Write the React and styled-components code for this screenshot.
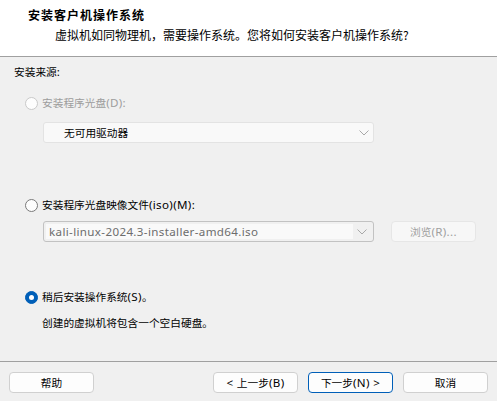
import React from 'react';
import styled, { createGlobalStyle, css } from 'styled-components';

const GlobalStyle = createGlobalStyle`
  html, body {
    margin: 0;
    padding: 0;
    background: #f0f0f0;
  }
  * {
    box-sizing: border-box;
  }
`;

const Dialog = styled.div`
  width: 497px;
  height: 401px;
  display: flex;
  flex-direction: column;
  background: #f0f0f0;
  font-family: "Noto Sans", "Noto Sans CJK SC", sans-serif;
  font-size: 10.7px;
  color: #000;
  overflow: hidden;
`;

// latin runs render wider in the original (GDI hinting), so bump them a bit
const Lat = styled.span`
  font-family: "Noto Sans", sans-serif;
  font-size: 11.6px;
  letter-spacing: 0.35px;
`;

const Header = styled.div`
  height: 57px;
  background: #ffffff;
  border-bottom: 1px solid #a0a0a0;
  padding-top: 7px;
`;

const Title = styled.div`
  margin-left: 28px;
  font-family: "Noto Sans CJK SC", sans-serif;
  font-size: 12px;
  font-weight: 700;
  line-height: 16px;
  letter-spacing: 1px;
`;

const Subtitle = styled.div`
  margin-left: 55px;
  margin-top: 4px;
  font-family: "Noto Sans CJK SC", sans-serif;
  font-size: 12px;
  line-height: 16px;
`;

const Body = styled.div`
  flex: 1;
  display: flex;
  flex-direction: column;
  padding: 7px 0 0 0;
`;

const GroupLabel = styled.div`
  margin-left: 14px;
  line-height: 16px;
`;

const RadioRow = styled.label`
  display: flex;
  align-items: center;
  gap: 4px;
  height: 16px;
  line-height: 16px;
  margin-left: 25px;
  margin-top: ${p => p.$top}px;
  color: ${p => (p.$disabled ? '#9d9d9d' : '#000')};
  white-space: pre;
`;

const RadioDot = styled.span`
  position: relative;
  width: 13px;
  height: 13px;
  border-radius: 50%;
  flex: none;
  background: #fdfdfd;
  border: 1px solid ${p => (p.$disabled ? '#c9c9c9' : '#7a7a7a')};
  ${p =>
    p.$checked &&
    css`
      background: #005fb8;
      border-color: #005fb8;
      &::after {
        content: '';
        position: absolute;
        left: 3px;
        top: 3px;
        width: 5px;
        height: 5px;
        border-radius: 50%;
        background: #fff;
      }
    `}
`;

const FieldRow = styled.div`
  display: flex;
  align-items: center;
  gap: 17px;
  margin-left: 43px;
  margin-top: ${p => p.$top}px;
`;

const Combo = styled.div`
  width: 331px;
  height: 21px;
  display: flex;
  align-items: center;
  border-radius: 3px;
  ${p =>
    p.$framed
      ? css`
          border: 1px solid #c2c2c2;
          background: #f0f0f0;
          padding: 2px;
        `
      : css`
          border: 1px solid #e3e3e3;
          background: #f9f9f9;
        `}
`;

const ComboText = styled.div`
  flex: 1;
  height: 100%;
  display: flex;
  align-items: center;
  padding-left: ${p => p.$indent}px;
  color: ${p => p.$color};
  background: ${p => (p.$framed ? '#f9f9f9' : 'transparent')};
  white-space: nowrap;
`;

const Arrow = styled.div`
  width: 18px;
  display: flex;
  justify-content: center;
  align-items: center;
`;

const Description = styled.div`
  margin-left: 42px;
  margin-top: 10px;
  line-height: 16px;
`;

const Footer = styled.div`
  height: 40px;
  border-top: 1px solid #a0a0a0;
  display: flex;
  align-items: flex-start;
  padding: 10px 9px 0 9px;
`;

const Button = styled.button`
  width: 85px;
  height: 21px;
  font-family: "Noto Sans", "Noto Sans CJK SC", sans-serif;
  font-size: 10.7px;
  line-height: 16px;
  padding: 0;
  white-space: pre;
  border-radius: 4px;
  background: ${p => (p.$disabled ? '#f7f7f7' : '#fdfdfd')};
  border: 1px solid ${p => (p.$primary ? '#005fb8' : p.$disabled ? '#e6e6e6' : '#d0d0d0')};
  color: ${p => (p.$disabled ? '#a0a0a0' : '#000')};
  margin-left: ${p => p.$gap || 0}px;
`;

const Spacer = styled.div`
  flex: 1;
`;

const Chevron = ({ color }) => (
  <svg width="10" height="6" viewBox="0 0 10 6">
    <path d="M0.5 0.5 L5 5 L9.5 0.5" fill="none" stroke={color} strokeWidth="1" />
  </svg>
);

export default function App() {
  return (
    <>
      <GlobalStyle />
      <Dialog>
        <Header>
          <Title>安装客户机操作系统</Title>
          <Subtitle>虚拟机如同物理机，需要操作系统。您将如何安装客户机操作系统?</Subtitle>
        </Header>
        <Body>
          <GroupLabel>安装来源<Lat>:</Lat></GroupLabel>

          <RadioRow $top={15} $disabled>
            <RadioDot $disabled />
            <span>安装程序光盘<Lat>(D):</Lat></span>
          </RadioRow>
          <FieldRow $top={11}>
            <Combo>
              <ComboText $indent={20} $color="#000">无可用驱动器</ComboText>
              <Arrow>
                <Chevron color="#a8a8a8" />
              </Arrow>
            </Combo>
          </FieldRow>

          <RadioRow $top={54}>
            <RadioDot />
            <span>安装程序光盘映像文件<Lat>(iso)(M):</Lat></span>
          </RadioRow>
          <FieldRow $top={8}>
            <Combo $framed>
              <ComboText $indent={3} $color="#6d6d6d" $framed>
                <Lat>kali-linux-2024.3-installer-amd64.iso</Lat>
              </ComboText>
              <Arrow>
                <Chevron color="#a8a8a8" />
              </Arrow>
            </Combo>
            <Button $disabled>浏览<Lat>(R)...</Lat></Button>
          </FieldRow>

          <RadioRow $top={47}>
            <RadioDot $checked />
            <span>稍后安装操作系统<Lat>(S)</Lat>。</span>
          </RadioRow>
          <Description>创建的虚拟机将包含一个空白硬盘。</Description>
        </Body>
        <Footer>
          <Button>帮助</Button>
          <Spacer />
          <Button><Lat>&lt; </Lat>上一步<Lat>(B)</Lat></Button>
          <Button $primary $gap={10}>下一步<Lat>(N) &gt;</Lat></Button>
          <Button $gap={10}>取消</Button>
        </Footer>
      </Dialog>
    </>
  );
}
